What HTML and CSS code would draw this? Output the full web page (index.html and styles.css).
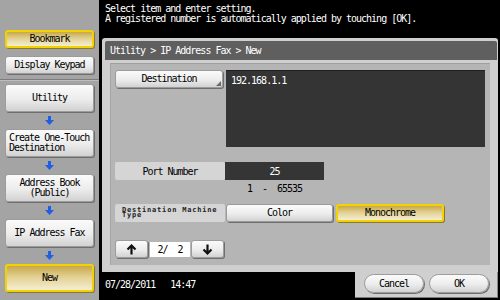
FILE: index.html
```html
<!DOCTYPE html>
<html lang="en">
<head>
    <meta charset="UTF-8">
    <title>IP Address Fax - New</title>
    <link rel="stylesheet" href="styles.css">
</head>
<body>
    <div class="side">
        <div class="side-top">
            <div class="btn sel small">Bookmark</div>
            <div class="btn small">Display Keypad</div>
        </div>
        <div class="side-flow">
            <div class="btn step">Utility</div>
            <div class="down"><svg width="9" height="9" viewBox="0 0 9 9"><polygon points="3,0 6,0 6,4 9,4 4.5,9 0,4 3,4" fill="#1f5fe6"/></svg></div>
            <div class="btn step left">Create One-Touch<br>Destination</div>
            <div class="down"><svg width="9" height="9" viewBox="0 0 9 9"><polygon points="3,0 6,0 6,4 9,4 4.5,9 0,4 3,4" fill="#1f5fe6"/></svg></div>
            <div class="btn step">Address Book<br>(Public)</div>
            <div class="down"><svg width="9" height="9" viewBox="0 0 9 9"><polygon points="3,0 6,0 6,4 9,4 4.5,9 0,4 3,4" fill="#1f5fe6"/></svg></div>
            <div class="btn step">IP Address Fax</div>
            <div class="down"><svg width="9" height="9" viewBox="0 0 9 9"><polygon points="3,0 6,0 6,4 9,4 4.5,9 0,4 3,4" fill="#1f5fe6"/></svg></div>
            <div class="btn step sel">New</div>
        </div>
    </div>

    <div class="main">
        <div class="msg">Select item and enter setting.<br>A registered number is automatically applied by touching [OK].</div>

        <div class="panel">
            <div class="crumb">Utility &gt; IP Address Fax &gt; New</div>
            <div class="content">
                <div class="row-dest">
                    <div class="btn field dest">Destination</div>
                    <div class="textbox">192.168.1.1</div>
                </div>
                <div class="row row-port">
                    <div class="label">Port Number</div>
                    <div class="value">25</div>
                </div>
                <div class="range">1  -  65535</div>
                <div class="row row-type">
                    <div class="label tiny">Destination Machine<br>Type</div>
                    <div class="btn opt">Color</div>
                    <div class="btn opt sel">Monochrome</div>
                </div>
                <div class="row row-nav">
                    <div class="btn nav"><svg width="11" height="11" viewBox="0 0 11 11"><path d="M5.5 10.5V1.5M1.5 5.5L5.5 1.5L9.5 5.5" stroke="#111" stroke-width="2.2" fill="none"/></svg></div>
                    <div class="page">2/  2</div>
                    <div class="btn nav"><svg width="11" height="11" viewBox="0 0 11 11"><path d="M5.5 0.5V9.5M1.5 5.5L5.5 9.5L9.5 5.5" stroke="#111" stroke-width="2.2" fill="none"/></svg></div>
                </div>
            </div>
        </div>

        <div class="foot">
            <div class="date">07/28/2011   14:47</div>
            <div class="actions">
                <div class="btn pill">Cancel</div>
                <div class="btn pill">OK</div>
            </div>
        </div>
    </div>
</body>
</html>
```

FILE: styles.css
```css
* { box-sizing: border-box; }
body { margin: 0; width: 500px; height: 300px; overflow: hidden; background: #000; display: flex; font-family: "DejaVu Sans Mono", monospace; font-size: 10px; letter-spacing: -1px; color: #000; white-space: nowrap; }

.side { width: 99px; flex-shrink: 0; background: #a4a4a4; display: flex; flex-direction: column; }
.side-top { height: 80px; flex-shrink: 0; padding: 30px 0 0 5px; border-bottom: 1px solid #7c7c7c; box-shadow: 0 1px 0 #bdbdbd; }
.side-top .btn + .btn { margin-top: 8px; }
.side-flow { padding: 4px 0 0 5px; }

.btn { display: flex; flex-shrink: 0; align-items: center; justify-content: center; text-align: center; line-height: 10px; background: linear-gradient(#fbfbfb, #ececec 55%, #d2d2d2); border: 1px solid #9c9c9c; border-radius: 3px; box-shadow: 1px 1px 0 #6e6e6e; }
.btn.sel { background: linear-gradient(#c8a848, #e2d092 45%, #f4eed2); border: 2px solid #f2d200; box-shadow: 1px 1px 0 #8a7a30; }
.small { width: 89px; height: 18px; }
.step { width: 89px; height: 28px; }
.step.left { justify-content: flex-start; text-align: left; padding-left: 3px; }
.down { height: 17px; width: 89px; display: flex; align-items: center; justify-content: center; }
.down svg { display: block; }

.main { flex: 1; display: flex; flex-direction: column; }
.msg { height: 38px; flex-shrink: 0; padding: 4px 0 0 6px; color: #fff; line-height: 10px; }

.panel { flex-shrink: 0; background: #cfcfcf; margin: 0 2px 0 3px; padding: 3px 1px 7px 3px; border-radius: 3px 3px 0 0; }
.crumb { height: 19px; background: #5f5f5f; color: #fff; padding-left: 5px; line-height: 19px; border-radius: 2px 2px 0 0; }
.content { height: 202px; margin: 3px 7px 0 5px; background: #b5b5b5; border-top: 1px solid #9e9e9e; border-left: 1px solid #a6a6a6; padding: 6px 5px 0 4px; }

.row-dest { display: flex; gap: 3px; height: 77px; }
.field { width: 108px; height: 18px; position: relative; }
.dest::after { content: ""; position: absolute; right: 1px; bottom: 1px; border-left: 5px solid transparent; border-bottom: 5px solid #6a6a6a; }
.textbox { flex: 1; background: #343434; color: #fff; padding: 5px 0 0 5px; line-height: 10px; border-top: 1px solid #1e1e1e; }

.row { display: flex; height: 18px; }
.row-port { margin-top: 15px; }
.label { width: 110px; flex-shrink: 0; background: #d5d5d5; border-radius: 2px; display: flex; align-items: center; justify-content: center; }
.value { width: 99px; background: #353535; color: #fff; display: flex; align-items: center; justify-content: center; }
.range { height: 14px; margin-left: 110px; width: 99px; text-align: center; line-height: 17px; white-space: pre; }
.label.tiny { justify-content: flex-start; padding-left: 7px; font-size: 7px; letter-spacing: 0.8px; line-height: 5px; font-weight: bold; color: #222; }
.row-type { margin-top: 10px; }
.opt { width: 107px; margin-left: 1px; }
.opt + .opt { margin-left: 3px; }
.opt.sel { width: 108px; }

.row-nav { margin-top: 18px; align-items: center; }
.nav { width: 33px; height: 18px; }
.nav svg { display: block; }
.page { width: 40px; height: 15px; margin: 0 1px 0 2px; background: #fff; display: flex; align-items: center; justify-content: center; white-space: pre; }

.foot { height: 28px; flex-shrink: 0; display: flex; }
.date { flex: 1; background: #000; color: #fff; padding: 8px 0 0 6px; line-height: 10px; white-space: pre; }
.actions { width: 143px; margin-right: 2px; background: #cfcfcf; display: flex; gap: 5px; padding: 2px 0 0 9px; height: 26px; border-bottom: 1px solid #7a7a7a; border-right: 1px solid #8a8a8a; }
.pill { width: 60px; height: 19px; border-radius: 10px; }
```
